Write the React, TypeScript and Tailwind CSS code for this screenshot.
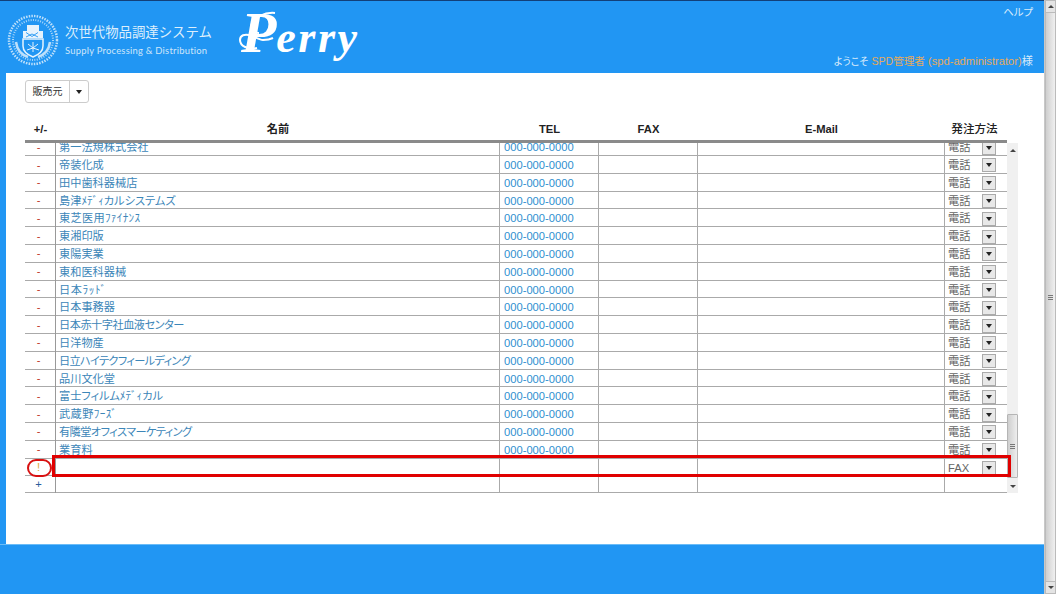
const rows = [
  { name: "第一法規株式会社", track: "" },
  { name: "帝装化成", track: "" },
  { name: "田中歯科器械店", track: "" },
  { name: "島津ﾒﾃﾞｨカルシステムズ", track: "" },
  { name: "東芝医用ﾌｧｲﾅﾝｽ", track: "tracking-[0.3px]" },
  { name: "東湘印版", track: "" },
  { name: "東陽実業", track: "" },
  { name: "東和医科器械", track: "" },
  { name: "日本ﾗｯﾄﾞ", track: "tracking-[0.6px]" },
  { name: "日本事務器", track: "" },
  { name: "日本赤十字社血液センター", track: "tracking-[-0.5px]" },
  { name: "日洋物産", track: "" },
  { name: "日立ハイテクフィールディング", track: "tracking-[-0.65px]" },
  { name: "品川文化堂", track: "" },
  { name: "富士フィルムﾒﾃﾞｨカル", track: "" },
  { name: "武蔵野ﾌｰｽﾞ", track: "tracking-[0.4px]" },
  { name: "有隣堂オフィスマーケティング", track: "tracking-[-0.6px]" },
  { name: "業育料", track: "" },
]

const font = "[font-family:'Liberation_Sans','Noto_Sans_CJK_JP',sans-serif]"

function Seal() {
  return (
    <svg width="52" height="52" viewBox="0 0 52 52" fill="none" stroke="#e6f3fd">
      <circle cx="26" cy="26" r="24" strokeWidth="2.5" strokeDasharray="1.5 1.2" opacity="0.8" />
      <circle cx="26" cy="26" r="20" strokeWidth="2" strokeDasharray="1 1.4" opacity="0.7" />
      <path d="M9 28c1 8 6 13 12 15M43 28c-1 8-6 13-12 15" strokeWidth="2.5" opacity="0.8" />
      <path d="M16 17h20v7H16z" fill="#e6f3fd" stroke="none" />
      <path d="M20 11h12v6H20z" fill="#e6f3fd" stroke="none" />
      <path d="M19 18.5l6 4 6-4M19 23l6-3 6 3" stroke="#2196f3" strokeWidth="0.9" />
      <path d="M16 25h20v7c0 6-5 9-10 11-5-2-10-5-10-11z" fill="#2196f3" strokeWidth="1.5" />
      <path d="M26 28v10M21 30l5 4 5-4M20 36l6-2 6 2" strokeWidth="1" />
    </svg>
  )
}

function Caret() {
  return <span className="block w-0 h-0 border-x-[3px] border-x-transparent border-t-[4px] border-t-[#222]" />
}

function MethodSelect({ value }: { value: string }) {
  return (
    <div className="flex items-center justify-between h-full pl-[3px] pr-[11px] text-[#666]">
      <span>{value}</span>
      <span className="flex items-center justify-center w-[14px] h-[14px] border border-[#aaa] bg-[#e8e8e8]">
        <Caret />
      </span>
    </div>
  )
}

function Row({ mark, markClass, name, track, tel, method, last }: { mark: string; markClass: string; name?: string; track?: string; tel?: string; method?: string; last?: boolean }) {
  return (
    <div className={`grid grid-cols-[31px_444px_99px_99px_247px_62px] border-b border-[#aaa] ${last ? "h-[16.6px]" : "h-[17.8px]"}`}>
      <div className={`flex items-center justify-center pr-[3px] border-r border-[#999] ${markClass}`}>{mark}</div>
      <div className={`flex items-center pl-[3px] pt-[1px] border-r border-[#aaa] text-[#3c86b8] whitespace-nowrap [font-feature-settings:'palt'] ${track}`}>{name}</div>
      <div className="flex items-center pl-[4px] pt-[1px] border-r border-[#aaa] text-[#2f8fd0]">{tel}</div>
      <div className="border-r border-[#aaa]" />
      <div className="border-r border-[#aaa]" />
      <div className="pt-[1px]">{method && <MethodSelect value={method} />}</div>
    </div>
  )
}

function ScrollArrow({ up }: { up?: boolean }) {
  return (
    <span
      className={`block w-0 h-0 border-x-[3px] border-x-transparent ${up ? "border-b-[3px] border-b-[#444]" : "border-t-[3px] border-t-[#444]"}`}
    />
  )
}

function Grip() {
  return (
    <div className="flex flex-col gap-[1px]">
      <span className="block w-[5px] h-[1px] bg-[#777]" />
      <span className="block w-[5px] h-[1px] bg-[#777]" />
      <span className="block w-[5px] h-[1px] bg-[#777]" />
    </div>
  )
}

export default function App() {
  return (
    <div className={`relative flex h-[594px] w-[1056px] overflow-hidden bg-white text-[11.2px] ${font}`}>
      <div className="flex flex-col w-[1044px]">
        <header className="flex h-[73px] border-t border-t-[#123f78] bg-[#2196f3]">
          <div className="pl-[7px] pt-[13px]">
            <Seal />
          </div>
          <div className="pl-[6px] pt-[22px] text-[#dceefc]">
            <div className="text-[13.4px] leading-[20px] whitespace-nowrap">次世代物品調達システム</div>
            <div className="mt-[1px] text-[9.4px] leading-[14px] tracking-[0.25px] whitespace-nowrap text-[#cfe6fa] [font-family:Lato,sans-serif]">
              Supply Processing &amp; Distribution
            </div>
          </div>
          <div className="relative flex items-baseline w-[125px] ml-[26px] h-[64px] pl-[3px] pt-[3px] text-white italic font-bold whitespace-nowrap [font-family:'Liberation_Serif',serif]">
            <span className="text-[58px] leading-[58px]">P</span>
            <span className="text-[44px] leading-[58px] tracking-[2.5px]">erry</span>
            <svg className="absolute left-0 top-[8px]" width="40" height="50" viewBox="0 0 40 50" fill="none" stroke="#fff" strokeWidth="2">
              <path d="M37 4C28 3 14 8 13 18c0 4 4 6 8 6M19 39C10 41 2 37 2 31c0-5 5-6 9-5 5 1 10 5 14 5 4 0 8-1 10-2" />
            </svg>
          </div>
          <div className="flex-1 flex flex-col items-end justify-between pr-[11px] pt-[4px] pb-[3px] text-[#d8ebfb] [font-feature-settings:'palt']">
            <div className="text-[10.4px]">ヘルプ</div>
            <div className="whitespace-nowrap">
              <span className="text-[10px]">ようこそ</span>
              <span className="text-[10.6px] text-[#e5aa5c]"> SPD管理者 </span>
              <span className="text-[#e5aa5c]">(spd-administrator)</span>様
            </div>
          </div>
        </header>

        <main className="flex flex-1 border-l-[6px] border-l-[#2196f3] pl-[19px]">
          <div className="w-[993px] pt-[7px]">
            <div className="flex w-[64px] h-[23px] border border-[#ccc] rounded-[3px] text-[10px] text-[#333]">
              <div className="flex items-center justify-center w-[44px] border-r border-[#ccc]">販売元</div>
              <div className="flex flex-1 items-center justify-center">
                <Caret />
              </div>
            </div>

            <div className="grid grid-cols-[31px_444px_99px_99px_247px_62px] w-[982px] mt-[19px] h-[21px] leading-[14px] border-b-[3px] border-b-[#8a8a8a] font-bold text-[#222]">
              <div className="text-center">+/-</div>
              <div className="text-center">名前</div>
              <div className="text-center">TEL</div>
              <div className="text-center">FAX</div>
              <div className="text-center">E-Mail</div>
              <div className="text-center pr-[3px] font-medium text-[11.6px] whitespace-nowrap">発注方法</div>
            </div>

            <div className="relative flex h-[350px]">
              <div className="w-[982px] shrink-0 overflow-hidden">
                <div className="-mt-[4.8px]">
                  {rows.map((row) => (
                    <Row key={row.name} mark="-" markClass="text-[#c0392b]" name={row.name} track={row.track} tel="000-000-0000" method="電話" />
                  ))}
                  <Row mark="!" markClass="text-[#e0a83c]" method="FAX" />
                  <Row mark="+" markClass="text-[#2a5c9a]" last />
                </div>
              </div>
              <div className="flex flex-col items-center shrink-0 w-[11px] bg-[#f0f0f0]">
                <div className="flex items-center justify-center h-[14px]">
                  <ScrollArrow up />
                </div>
                <div className="flex-1 w-full pt-[257px]">
                  <div className="flex items-center justify-center h-[64px] border border-[#b5b5b5] rounded-[1px] bg-linear-to-r from-[#cfcfcf] to-[#eeeeee]">
                    <Grip />
                  </div>
                </div>
                <div className="flex items-center justify-center h-[14px]">
                  <ScrollArrow />
                </div>
              </div>
            </div>
          </div>
        </main>

        <footer className="h-[50px] bg-[#2196f3] border-t border-t-[#6bbcf7]" />
      </div>

      <aside className="flex flex-col items-center w-[12px] bg-[#f1f1f1] border-l border-[#c8c8c8]">
        <div className="flex items-center justify-center w-full h-[13px] border border-[#bbb] bg-[#e4e4e4]">
          <ScrollArrow up />
        </div>
        <div className="flex flex-1 items-center justify-center w-full border-x border-[#bbb] bg-linear-to-r from-[#cfcfcf] to-[#f0f0f0]">
          <Grip />
        </div>
        <div className="flex items-center justify-center w-full h-[13px] border border-[#bbb] bg-[#e4e4e4]">
          <ScrollArrow />
        </div>
      </aside>

      {/* annotations over the screenshot */}
      <div className="absolute left-[52px] top-[455px] w-[959px] h-[22px] border-[3px] border-[#e00000]" />
      <div className="absolute left-[27px] top-[459px] w-[25px] h-[18px] rounded-full border-2 border-[#d81010]" />
    </div>
  )
}
